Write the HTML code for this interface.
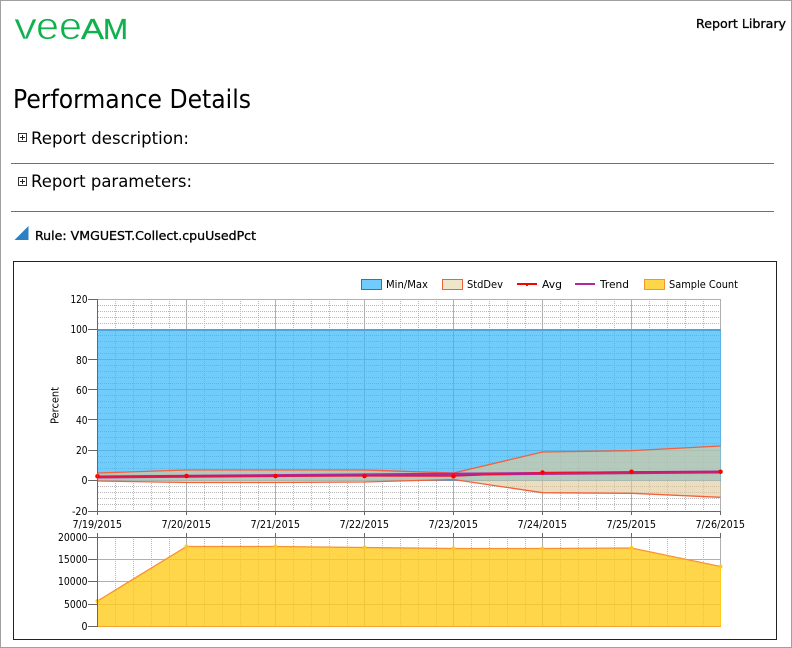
<!DOCTYPE html>
<html lang="en"><head><meta charset="utf-8"><title>Performance Details</title>
<style>
html,body{margin:0;padding:0;background:#fff;width:792px;height:648px;overflow:hidden}
svg{display:block}
text{font-family:"DejaVu Sans","Liberation Sans",sans-serif;fill:#000}
.a{font-size:11px}
.l{font-family:"Liberation Sans",sans-serif;fill:#0fb14f}
.m{stroke:#000;stroke-width:.3}
</style></head><body>
<svg width="792" height="648" viewBox="0 0 792 648" xmlns="http://www.w3.org/2000/svg">
<defs>
<path id="minV1" d="M115.5 299V511M133.5 299V511M151.5 299V511M169.5 299V511M204.5 299V511M222.5 299V511M240.5 299V511M258.5 299V511M293.5 299V511M311.5 299V511M329.5 299V511M347.5 299V511M382.5 299V511M400.5 299V511M418.5 299V511M436.5 299V511M471.5 299V511M489.5 299V511M507.5 299V511M525.5 299V511M560.5 299V511M578.5 299V511M596.5 299V511M614.5 299V511M649.5 299V511M667.5 299V511M685.5 299V511M703.5 299V511"/>
<path id="minH" d="M98 305.5H720M98 311.5H720M98 317.5H720M98 323.5H720M98 335.5H720M98 341.5H720M98 347.5H720M98 353.5H720M98 365.5H720M98 371.5H720M98 377.5H720M98 383.5H720M98 395.5H720M98 401.5H720M98 407.5H720M98 413.5H720M98 425.5H720M98 431.5H720M98 437.5H720M98 443.5H720M98 456.5H720M98 462.5H720M98 468.5H720M98 474.5H720M98 486.5H720M98 492.5H720M98 498.5H720M98 504.5H720"/>
<path id="majV1" d="M186.5 299V511M275.5 299V511M364.5 299V511M453.5 299V511M542.5 299V511M631.5 299V511M720.5 299V511"/>
<path id="majH1" d="M98 359.5H720M98 389.5H720M98 419.5H720M98 450.5H720"/>
<path id="minV2" d="M115.5 537V626M133.5 537V626M151.5 537V626M169.5 537V626M204.5 537V626M222.5 537V626M240.5 537V626M258.5 537V626M293.5 537V626M311.5 537V626M329.5 537V626M347.5 537V626M382.5 537V626M400.5 537V626M418.5 537V626M436.5 537V626M471.5 537V626M489.5 537V626M507.5 537V626M525.5 537V626M560.5 537V626M578.5 537V626M596.5 537V626M614.5 537V626M649.5 537V626M667.5 537V626M685.5 537V626M703.5 537V626"/>
<path id="maj2" d="M186.5 537V626M275.5 537V626M364.5 537V626M453.5 537V626M542.5 537V626M631.5 537V626M720.5 537V626M98 559.5H720M98 581.5H720M98 604.5H720"/>
<clipPath id="blue"><rect x="98" y="329" width="623" height="152"/></clipPath>
<clipPath id="yel"><polygon points="97.5,601 186.5,546.5 275.5,546.5 364.5,547.5 453.5,548.5 542.5,548.5 631.5,548 720.5,566.5 720.5,626.5 97.5,626.5"/></clipPath>
</defs>

<!-- page border -->
<rect x="0.5" y="0.5" width="791" height="647" fill="#fff" stroke="#a0a0a0"/>

<!-- logo -->
<g stroke="#fff" stroke-width="0.7">
<text class="l" x="14" y="39" font-size="38" textLength="23" lengthAdjust="spacingAndGlyphs">v</text>
<text class="l" x="36" y="39" font-size="38" textLength="23" lengthAdjust="spacingAndGlyphs">e</text>
<text class="l" x="59" y="39" font-size="38" textLength="23" lengthAdjust="spacingAndGlyphs">e</text>
</g>
<g stroke="#0fb14f" stroke-width="0.3">
<text class="l" x="81" y="39" font-size="29" textLength="23" lengthAdjust="spacingAndGlyphs">A</text>
<text class="l" x="103" y="39" font-size="29" textLength="25" lengthAdjust="spacingAndGlyphs">M</text>
</g>

<text class="m" x="696" y="28" font-size="12" textLength="90" lengthAdjust="spacingAndGlyphs">Report Library</text>
<text x="13" y="108" font-size="26" textLength="238" lengthAdjust="spacingAndGlyphs">Performance Details</text>

<!-- sections -->
<rect x="18.5" y="133.5" width="8" height="8" fill="#fff" stroke="#333"/>
<path d="M20 137.5H25M22.5 135V140" stroke="#222" fill="none"/>
<text x="31" y="144" font-size="17" textLength="158" lengthAdjust="spacingAndGlyphs">Report description:</text>
<rect x="11" y="163" width="763" height="1" fill="#2e82c4"/>
<rect x="18.5" y="177.5" width="8" height="8" fill="#fff" stroke="#333"/>
<path d="M20 181.5H25M22.5 179V184" stroke="#222" fill="none"/>
<text x="31" y="187" font-size="17" textLength="161" lengthAdjust="spacingAndGlyphs">Report parameters:</text>
<rect x="11" y="211" width="763" height="1" fill="#2e82c4"/>
<polygon points="14.5,240 28.5,240 28.5,226" fill="#2b80c4"/>
<text class="m" x="35" y="240" font-size="12" textLength="221" lengthAdjust="spacingAndGlyphs">Rule: VMGUEST.Collect.cpuUsedPct</text>

<!-- chart frame -->
<rect x="13.5" y="261.5" width="763" height="378" fill="#fff" stroke="#222"/>

<!-- legend -->
<rect x="361.5" y="279.5" width="20" height="10" fill="#70ccfa" stroke="#2a78b8"/>
<text class="a" x="386" y="288" textLength="42" lengthAdjust="spacingAndGlyphs">Min/Max</text>
<rect x="442.5" y="279.5" width="20" height="10" fill="#efe5c8" stroke="#f0603c"/>
<text class="a" x="467" y="288" textLength="36" lengthAdjust="spacingAndGlyphs">StdDev</text>
<rect x="517" y="283" width="20" height="2" fill="#f00"/><rect x="526" y="284" width="2" height="2" fill="#f00"/>
<text class="a" x="542" y="288" textLength="20" lengthAdjust="spacingAndGlyphs">Avg</text>
<rect x="575" y="283" width="20" height="2" fill="#b0289a"/>
<text class="a" x="600" y="288" textLength="29" lengthAdjust="spacingAndGlyphs">Trend</text>
<rect x="644.5" y="279.5" width="20" height="10" fill="#ffd54a" stroke="#f7932f"/>
<text class="a" x="669" y="288" textLength="69" lengthAdjust="spacingAndGlyphs">Sample Count</text>

<!-- upper plot grid -->
<g fill="none">
<use href="#minV1" stroke="#b8b8b8" stroke-dasharray="1 1"/>
<use href="#minH" stroke="#b8b8b8" stroke-dasharray="1 1"/>
<use href="#majV1" stroke="#b0b0b0"/>
<path d="M98 299.5H721" stroke="#b0b0b0"/>
</g>
<rect x="98" y="329" width="623" height="152" fill="#70ccfa"/>
<g fill="none" clip-path="url(#blue)">
<use href="#minV1" stroke="#5cb6e8" stroke-dasharray="1 1"/>
<use href="#minH" stroke="#5cb6e8" stroke-dasharray="1 1"/>
<use href="#majV1" stroke="#5cb4e4"/>
<use href="#majH1" stroke="#5cb4e4"/>
</g>
<rect x="98" y="329" width="623" height="2" fill="#4fa4dc"/>
<path d="M98 480.5H721" stroke="#4f9fd4" fill="none"/>

<!-- stddev -->
<polygon points="97.5,473 186.5,470 275.5,470 364.5,470 453.5,473 542.5,452 631.5,450.7 720.5,446 720.5,497.3 631.5,493.3 542.5,492.7 453.5,479.5 364.5,482 275.5,482.5 186.5,482.5 97.5,481" fill="#dfc896" fill-opacity=".62"/>
<path d="M97.5 473L186.5 470L275.5 470L364.5 470L453.5 473L542.5 452L631.5 450.7L720.5 446" fill="none" stroke="#f2603c" stroke-width="1.3"/>
<path d="M97.5 481L186.5 482.5L275.5 482.5L364.5 482L453.5 479.5L542.5 492.7L631.5 493.3L720.5 497.3" fill="none" stroke="#f2603c" stroke-width="1.3"/>
<!-- trend + avg -->
<path d="M97.5 477L720.5 472" fill="none" stroke="#b0289a" stroke-width="3"/>
<path d="M97.5 476.3L186.5 476L275.5 476L364.5 476L453.5 476.2L542.5 472.5L631.5 471.8L720.5 471.8" fill="none" stroke="#f0102a" stroke-width="1.2"/>
<g fill="#f00">
<circle cx="97.5" cy="476.3" r="2.3"/><circle cx="186.5" cy="476" r="2.3"/><circle cx="275.5" cy="476" r="2.3"/><circle cx="364.5" cy="476" r="2.3"/><circle cx="453.5" cy="476.2" r="2.3"/><circle cx="542.5" cy="472.5" r="2.3"/><circle cx="631.5" cy="471.8" r="2.3"/><circle cx="720.5" cy="471.8" r="2.3"/>
</g>

<!-- upper axes -->
<path d="M97.5 299V515M97 511.5H721M88 299.5H98M88 329.5H98M88 359.5H98M88 389.5H98M88 419.5H98M88 450.5H98M88 480.5H98M88 511.5H98M186.5 511V515M275.5 511V515M364.5 511V515M453.5 511V515M542.5 511V515M631.5 511V515M720.5 511V515" fill="none" stroke="#666"/>
<g class="a">
<text class="a" x="70.5" y="303" textLength="17" lengthAdjust="spacingAndGlyphs">120</text>
<text class="a" x="70.5" y="333" textLength="17" lengthAdjust="spacingAndGlyphs">100</text>
<text class="a" x="76" y="364" textLength="11.5" lengthAdjust="spacingAndGlyphs">80</text>
<text class="a" x="76" y="394" textLength="11.5" lengthAdjust="spacingAndGlyphs">60</text>
<text class="a" x="76" y="424" textLength="11.5" lengthAdjust="spacingAndGlyphs">40</text>
<text class="a" x="76" y="454" textLength="11.5" lengthAdjust="spacingAndGlyphs">20</text>
<text class="a" x="81.5" y="484" textLength="6" lengthAdjust="spacingAndGlyphs">0</text>
<text class="a" x="72" y="515" textLength="15.5" lengthAdjust="spacingAndGlyphs">-20</text>
</g>
<text class="a" transform="translate(58.5 424) rotate(-90)" textLength="37" lengthAdjust="spacingAndGlyphs">Percent</text>
<text class="a" x="72.5" y="528" textLength="49.5" lengthAdjust="spacingAndGlyphs">7/19/2015</text>
<text class="a" x="161.5" y="528" textLength="49.5" lengthAdjust="spacingAndGlyphs">7/20/2015</text>
<text class="a" x="250.5" y="528" textLength="49.5" lengthAdjust="spacingAndGlyphs">7/21/2015</text>
<text class="a" x="339.5" y="528" textLength="49.5" lengthAdjust="spacingAndGlyphs">7/22/2015</text>
<text class="a" x="428.5" y="528" textLength="49.5" lengthAdjust="spacingAndGlyphs">7/23/2015</text>
<text class="a" x="517.5" y="528" textLength="49.5" lengthAdjust="spacingAndGlyphs">7/24/2015</text>
<text class="a" x="606.5" y="528" textLength="49.5" lengthAdjust="spacingAndGlyphs">7/25/2015</text>
<text class="a" x="695.5" y="528" textLength="49.5" lengthAdjust="spacingAndGlyphs">7/26/2015</text>

<!-- lower plot -->
<g fill="none">
<use href="#minV2" stroke="#b8b8b8" stroke-dasharray="1 1"/>
<use href="#maj2" stroke="#b0b0b0"/>
</g>
<polygon points="97.5,601 186.5,546.5 275.5,546.5 364.5,547.5 453.5,548.5 542.5,548.5 631.5,548 720.5,566.5 720.5,626.5 97.5,626.5" fill="#ffd54a"/>
<g fill="none" clip-path="url(#yel)">
<use href="#minV2" stroke="#f2c43a" stroke-dasharray="1 1"/>
<use href="#maj2" stroke="#f2c43a"/>
</g>
<path d="M97.5 601L186.5 546.5L275.5 546.5L364.5 547.5L453.5 548.5L542.5 548.5L631.5 548L720.5 566.5" fill="none" stroke="#f7932f" stroke-width="1.3"/>
<path d="M98 626.5H721" stroke="#f7a52f" fill="none"/>
<path d="M720.5 566V626" stroke="#ffc820" fill="none"/>
<g fill="#ffc820">
<circle cx="97.5" cy="601" r="2"/><circle cx="186.5" cy="546.5" r="2"/><circle cx="275.5" cy="546.5" r="2"/><circle cx="364.5" cy="547.5" r="2"/><circle cx="453.5" cy="548.5" r="2"/><circle cx="542.5" cy="548.5" r="2"/><circle cx="631.5" cy="548" r="2"/><circle cx="720.5" cy="566.5" r="2"/>
</g>
<path d="M97.5 533V627M97 537.5H721M88 537.5H98M88 559.5H98M88 581.5H98M88 604.5H98M88 626.5H98M186.5 533V537M275.5 533V537M364.5 533V537M453.5 533V537M542.5 533V537M631.5 533V537M720.5 533V537" fill="none" stroke="#666"/>
<text class="a" x="58" y="541" textLength="29.5" lengthAdjust="spacingAndGlyphs">20000</text>
<text class="a" x="58" y="563" textLength="29.5" lengthAdjust="spacingAndGlyphs">15000</text>
<text class="a" x="58" y="585" textLength="29.5" lengthAdjust="spacingAndGlyphs">10000</text>
<text class="a" x="64" y="608" textLength="23.5" lengthAdjust="spacingAndGlyphs">5000</text>
<text class="a" x="81.5" y="630" textLength="6" lengthAdjust="spacingAndGlyphs">0</text>
</svg>
</body></html>
